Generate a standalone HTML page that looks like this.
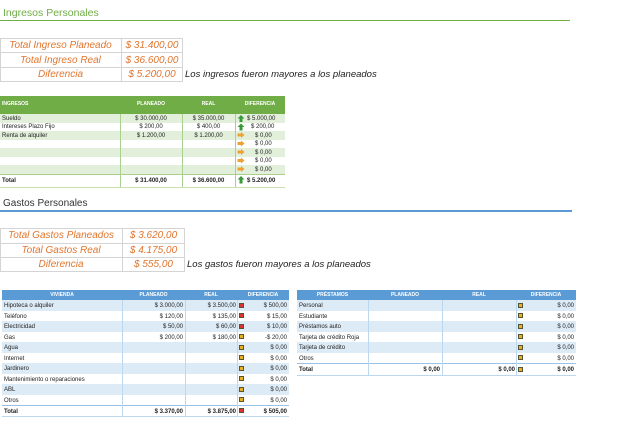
<!DOCTYPE html>
<html><head><meta charset="utf-8"><style>
*{margin:0;padding:0;box-sizing:border-box}
body{width:640px;height:427px;background:#fff;position:relative;overflow:hidden;font-family:"Liberation Sans",sans-serif}
.a{position:absolute}
.t{font-size:6px;color:#222;white-space:nowrap;line-height:1}
.or{color:#e0762f;font-style:italic;font-size:10px;text-align:center;position:absolute;white-space:nowrap}
.r{text-align:right}
.c{text-align:center}
.sq{position:absolute;width:5px;height:5px;border:1px solid #553;}
</style></head><body>
<div class="a" style="left:3px;top:7px;font-size:10.5px;color:#70ad47">Ingresos Personales</div>
<div class="a" style="left:0;top:20px;width:570px;height:1px;background:#70ad47"></div>

<div class="a" style="left:0;top:38px;width:183px;height:44px;border:1px solid #d4d4d4"></div>
<div class="a" style="left:121px;top:38px;width:1px;height:44px;background:#d4d4d4"></div>
<div class="a" style="left:0;top:52px;width:183px;height:1px;background:#d4d4d4"></div>
<div class="a" style="left:0;top:67px;width:183px;height:1px;background:#d4d4d4"></div>
<div class="or" style="left:0;top:39.5px;width:121px">Total Ingreso Planeado</div>
<div class="or" style="left:0;top:54.5px;width:121px">Total Ingreso Real</div>
<div class="or" style="left:0;top:68.5px;width:121px">Diferencia</div>
<div class="or" style="left:121px;top:39.5px;width:62px">$ 31.400,00</div>
<div class="or" style="left:121px;top:54.5px;width:62px">$ 36.600,00</div>
<div class="or" style="left:121px;top:68.5px;width:62px">$ 5.200,00</div>
<div class="a" style="left:185px;top:69px;font-size:9.5px;font-style:italic;color:#222;white-space:nowrap">Los ingresos fueron mayores a los planeados</div>

<div class="a" style="left:0;top:96px;width:285px;height:18px;background:#70ad47"></div>
<div class="a t" style="left:2px;top:102px;color:#fff;font-weight:bold;font-size:5px">INGRESOS</div>
<div class="a t c" style="left:120px;top:102px;width:62px;color:#fff;font-weight:bold;font-size:5px">PLANEADO</div>
<div class="a t c" style="left:182px;top:102px;width:53px;color:#fff;font-weight:bold;font-size:5px">REAL</div>
<div class="a t c" style="left:235px;top:102px;width:50px;color:#fff;font-weight:bold;font-size:5px">DIFERENCIA</div>
<div class="a" style="left:0;top:114px;width:285px;height:8.5px;background:#e2efda"></div>
<div class="a" style="left:0;top:131px;width:285px;height:8.5px;background:#e2efda"></div>
<div class="a" style="left:0;top:148px;width:285px;height:8.5px;background:#e2efda"></div>
<div class="a" style="left:0;top:165px;width:285px;height:8.5px;background:#e2efda"></div>
<div class="a" style="left:0;top:173.5px;width:285px;height:1px;background:#a9d08e"></div>
<div class="a" style="left:120px;top:114px;width:1px;height:73px;background:#a9d08e"></div>
<div class="a" style="left:182px;top:114px;width:1px;height:73px;background:#a9d08e"></div>
<div class="a" style="left:235px;top:114px;width:1px;height:73px;background:#a9d08e"></div>
<div class="a" style="left:0;top:187px;width:285px;height:1px;background:#c6e0b4"></div>
<div class="a t" style="left:2px;top:115.5px">Sueldo</div>
<div class="a t" style="left:2px;top:124px">Intereses Plazo Fijo</div>
<div class="a t" style="left:2px;top:132.5px">Renta de alquiler</div>
<div class="a t c" style="left:120px;top:115.5px;width:62px">$ 30.000,00</div>
<div class="a t c" style="left:120px;top:124px;width:62px">$ 200,00</div>
<div class="a t c" style="left:120px;top:132.5px;width:62px">$ 1.200,00</div>
<div class="a t c" style="left:182px;top:115.5px;width:53px">$ 35.000,00</div>
<div class="a t c" style="left:182px;top:124px;width:53px">$ 400,00</div>
<div class="a t c" style="left:182px;top:132.5px;width:53px">$ 1.200,00</div>
<div class="a t" style="left:247px;top:115.5px">$ 5.000,00</div>
<div class="a t" style="left:251px;top:124px">$ 200,00</div>
<div class="a t" style="left:255px;top:132.5px">$ 0,00</div>
<div class="a t" style="left:255px;top:141px">$ 0,00</div>
<div class="a t" style="left:255px;top:149.5px">$ 0,00</div>
<div class="a t" style="left:255px;top:158px">$ 0,00</div>
<div class="a t" style="left:255px;top:166.5px">$ 0,00</div>
<svg class="a" style="left:237px;top:114px" width="8" height="73" viewBox="0 0 8 73">
<g fill="#3a9a3a"><path d="M4 1L7.5 4.5H5.5V8H2.5V4.5H0.5Z"/><path d="M4 9.5L7.5 13H5.5V16.5H2.5V13H0.5Z"/><path d="M4 62L7.5 65.5H5.5V69.5H2.5V65.5H0.5Z"/></g>
<g fill="#f0a030"><path d="M0.5 19.5H4V18L7.5 21L4 24V22.5H0.5Z"/><path d="M0.5 28H4V26.5L7.5 29.5L4 32.5V31H0.5Z"/><path d="M0.5 36.5H4V35L7.5 38L4 41V39.5H0.5Z"/><path d="M0.5 45H4V43.5L7.5 46.5L4 49.5V48H0.5Z"/><path d="M0.5 53.5H4V52L7.5 55L4 58V56.5H0.5Z"/></g>
</svg>
<div class="a t" style="left:2px;top:178px;font-weight:bold">Total</div>
<div class="a t c" style="left:120px;top:178px;width:62px;font-weight:bold">$ 31.400,00</div>
<div class="a t c" style="left:182px;top:178px;width:53px;font-weight:bold">$ 36.600,00</div>
<div class="a t" style="left:247px;top:178px;font-weight:bold">$ 5.200,00</div>

<div class="a" style="left:3px;top:198px;font-size:10px;color:#333">Gastos Personales</div>
<div class="a" style="left:0;top:210px;width:572px;height:1.5px;background:#5b9bd5"></div>
<div class="a" style="left:0;top:228px;width:185px;height:44px;border:1px solid #d4d4d4"></div>
<div class="a" style="left:122px;top:228px;width:1px;height:44px;background:#d4d4d4"></div>
<div class="a" style="left:0;top:243px;width:185px;height:1px;background:#d4d4d4"></div>
<div class="a" style="left:0;top:257px;width:185px;height:1px;background:#d4d4d4"></div>
<div class="or" style="left:0;top:229.5px;width:122px">Total Gastos Planeados</div>
<div class="or" style="left:0;top:244.5px;width:122px">Total Gastos Real</div>
<div class="or" style="left:0;top:258.5px;width:122px">Diferencia</div>
<div class="or" style="left:122px;top:229.5px;width:63px">$ 3.620,00</div>
<div class="or" style="left:122px;top:244.5px;width:63px">$ 4.175,00</div>
<div class="or" style="left:122px;top:258.5px;width:63px">$ 555,00</div>
<div class="a" style="left:187px;top:259px;font-size:9.5px;font-style:italic;color:#222;white-space:nowrap">Los gastos fueron mayores a los planeados</div>

<div class="a" style="left:2px;top:290px;width:287px;height:10px;background:#5b9bd5"></div>
<div class="a t c" style="left:2px;top:292.5px;width:120px;color:#fff;font-weight:bold;font-size:5px">VIVIENDA</div>
<div class="a t c" style="left:122px;top:292.5px;width:63px;color:#fff;font-weight:bold;font-size:5px">PLANEADO</div>
<div class="a t c" style="left:185px;top:292.5px;width:52px;color:#fff;font-weight:bold;font-size:5px">REAL</div>
<div class="a t c" style="left:237px;top:292.5px;width:52px;color:#fff;font-weight:bold;font-size:5px">DIFERENCIA</div>
<div class="a" style="left:2px;top:300px;width:287px;height:10.5px;background:#ddebf7"></div>
<div class="a" style="left:2px;top:321px;width:287px;height:10.5px;background:#ddebf7"></div>
<div class="a" style="left:2px;top:342px;width:287px;height:10.5px;background:#ddebf7"></div>
<div class="a" style="left:2px;top:363px;width:287px;height:10.5px;background:#ddebf7"></div>
<div class="a" style="left:2px;top:384px;width:287px;height:10.5px;background:#ddebf7"></div>
<div class="a" style="left:2px;top:404.5px;width:287px;height:1.5px;background:#9bc2e6"></div>
<div class="a" style="left:2px;top:416px;width:287px;height:1px;background:#bdd7ee"></div>
<div class="a" style="left:122px;top:300px;width:1px;height:116px;background:#bdd7ee"></div>
<div class="a" style="left:185px;top:300px;width:1px;height:116px;background:#bdd7ee"></div>
<div class="a" style="left:237px;top:300px;width:1px;height:116px;background:#bdd7ee"></div>
<div class="a t" style="left:4px;top:303px">Hipoteca o alquiler</div>
<div class="a t" style="left:4px;top:313.5px">Teléfono</div>
<div class="a t" style="left:4px;top:324px">Electricidad</div>
<div class="a t" style="left:4px;top:334.5px">Gas</div>
<div class="a t" style="left:4px;top:345px">Agua</div>
<div class="a t" style="left:4px;top:355.5px">Internet</div>
<div class="a t" style="left:4px;top:366px">Jardinero</div>
<div class="a t" style="left:4px;top:376.5px">Mantenimiento o reparaciones</div>
<div class="a t" style="left:4px;top:387px">ABL</div>
<div class="a t" style="left:4px;top:397.5px">Otros</div>
<div class="a t r" style="left:122px;top:303px;width:61px">$ 3.000,00</div>
<div class="a t r" style="left:122px;top:313.5px;width:61px">$ 120,00</div>
<div class="a t r" style="left:122px;top:324px;width:61px">$ 50,00</div>
<div class="a t r" style="left:122px;top:334.5px;width:61px">$ 200,00</div>
<div class="a t r" style="left:185px;top:303px;width:51px">$ 3.500,00</div>
<div class="a t r" style="left:185px;top:313.5px;width:51px">$ 135,00</div>
<div class="a t r" style="left:185px;top:324px;width:51px">$ 60,00</div>
<div class="a t r" style="left:185px;top:334.5px;width:51px">$ 180,00</div>
<div class="a t r" style="left:237px;top:303px;width:50px">$ 500,00</div>
<div class="a t r" style="left:237px;top:313.5px;width:50px">$ 15,00</div>
<div class="a t r" style="left:237px;top:324px;width:50px">$ 10,00</div>
<div class="a t r" style="left:237px;top:334.5px;width:50px">-$ 20,00</div>
<div class="a t r" style="left:237px;top:345px;width:50px">$ 0,00</div>
<div class="a t r" style="left:237px;top:355.5px;width:50px">$ 0,00</div>
<div class="a t r" style="left:237px;top:366px;width:50px">$ 0,00</div>
<div class="a t r" style="left:237px;top:376.5px;width:50px">$ 0,00</div>
<div class="a t r" style="left:237px;top:387px;width:50px">$ 0,00</div>
<div class="a t r" style="left:237px;top:397.5px;width:50px">$ 0,00</div>
<div class="sq" style="left:239px;top:302.5px;background:#d33"></div>
<div class="sq" style="left:239px;top:313px;background:#d33"></div>
<div class="sq" style="left:239px;top:323.5px;background:#d33"></div>
<div class="sq" style="left:239px;top:334px;background:#e8b020"></div>
<div class="sq" style="left:239px;top:344.5px;background:#e8b020"></div>
<div class="sq" style="left:239px;top:355px;background:#e8b020"></div>
<div class="sq" style="left:239px;top:365.5px;background:#e8b020"></div>
<div class="sq" style="left:239px;top:376px;background:#e8b020"></div>
<div class="sq" style="left:239px;top:386.5px;background:#e8b020"></div>
<div class="sq" style="left:239px;top:397px;background:#e8b020"></div>
<div class="sq" style="left:239px;top:408px;background:#d33"></div>
<div class="a t" style="left:4px;top:409px;font-weight:bold">Total</div>
<div class="a t r" style="left:122px;top:409px;width:61px;font-weight:bold">$ 3.370,00</div>
<div class="a t r" style="left:185px;top:409px;width:51px;font-weight:bold">$ 3.875,00</div>
<div class="a t r" style="left:237px;top:409px;width:50px;font-weight:bold">$ 505,00</div>

<div class="a" style="left:297px;top:290px;width:279px;height:10px;background:#5b9bd5"></div>
<div class="a t c" style="left:297px;top:292.5px;width:71px;color:#fff;font-weight:bold;font-size:5px">PRÉSTAMOS</div>
<div class="a t c" style="left:368px;top:292.5px;width:74px;color:#fff;font-weight:bold;font-size:5px">PLANEADO</div>
<div class="a t c" style="left:442px;top:292.5px;width:74px;color:#fff;font-weight:bold;font-size:5px">REAL</div>
<div class="a t c" style="left:516px;top:292.5px;width:60px;color:#fff;font-weight:bold;font-size:5px">DIFERENCIA</div>
<div class="a" style="left:297px;top:300px;width:279px;height:10.5px;background:#ddebf7"></div>
<div class="a" style="left:297px;top:321px;width:279px;height:10.5px;background:#ddebf7"></div>
<div class="a" style="left:297px;top:342px;width:279px;height:10.5px;background:#ddebf7"></div>
<div class="a" style="left:297px;top:362.5px;width:279px;height:1.5px;background:#9bc2e6"></div>
<div class="a" style="left:297px;top:375px;width:279px;height:1px;background:#bdd7ee"></div>
<div class="a" style="left:368px;top:300px;width:1px;height:75px;background:#bdd7ee"></div>
<div class="a" style="left:442px;top:300px;width:1px;height:75px;background:#bdd7ee"></div>
<div class="a" style="left:516px;top:300px;width:1px;height:75px;background:#bdd7ee"></div>
<div class="a t" style="left:299px;top:303px">Personal</div>
<div class="a t" style="left:299px;top:313.5px">Estudiante</div>
<div class="a t" style="left:299px;top:324px">Préstamos auto</div>
<div class="a t" style="left:299px;top:334.5px">Tarjeta de crédito Roja</div>
<div class="a t" style="left:299px;top:345px">Tarjeta de crédito</div>
<div class="a t" style="left:299px;top:355.5px">Otros</div>
<div class="a t" style="left:299px;top:367px;font-weight:bold">Total</div>
<div class="a t r" style="left:368px;top:367px;width:72px;font-weight:bold">$ 0,00</div>
<div class="a t r" style="left:442px;top:367px;width:73px;font-weight:bold">$ 0,00</div>
<div class="a t r" style="left:516px;top:303px;width:58px">$ 0,00</div>
<div class="a t r" style="left:516px;top:313.5px;width:58px">$ 0,00</div>
<div class="a t r" style="left:516px;top:324px;width:58px">$ 0,00</div>
<div class="a t r" style="left:516px;top:334.5px;width:58px">$ 0,00</div>
<div class="a t r" style="left:516px;top:345px;width:58px">$ 0,00</div>
<div class="a t r" style="left:516px;top:355.5px;width:58px">$ 0,00</div>
<div class="a t r" style="left:516px;top:367px;width:58px;font-weight:bold">$ 0,00</div>
<div class="sq" style="left:518px;top:302.5px;background:#e8b020"></div>
<div class="sq" style="left:518px;top:313px;background:#e8b020"></div>
<div class="sq" style="left:518px;top:323.5px;background:#e8b020"></div>
<div class="sq" style="left:518px;top:334px;background:#e8b020"></div>
<div class="sq" style="left:518px;top:344.5px;background:#e8b020"></div>
<div class="sq" style="left:518px;top:355px;background:#e8b020"></div>
<div class="sq" style="left:518px;top:366.5px;background:#e8b020"></div>
</body></html>
